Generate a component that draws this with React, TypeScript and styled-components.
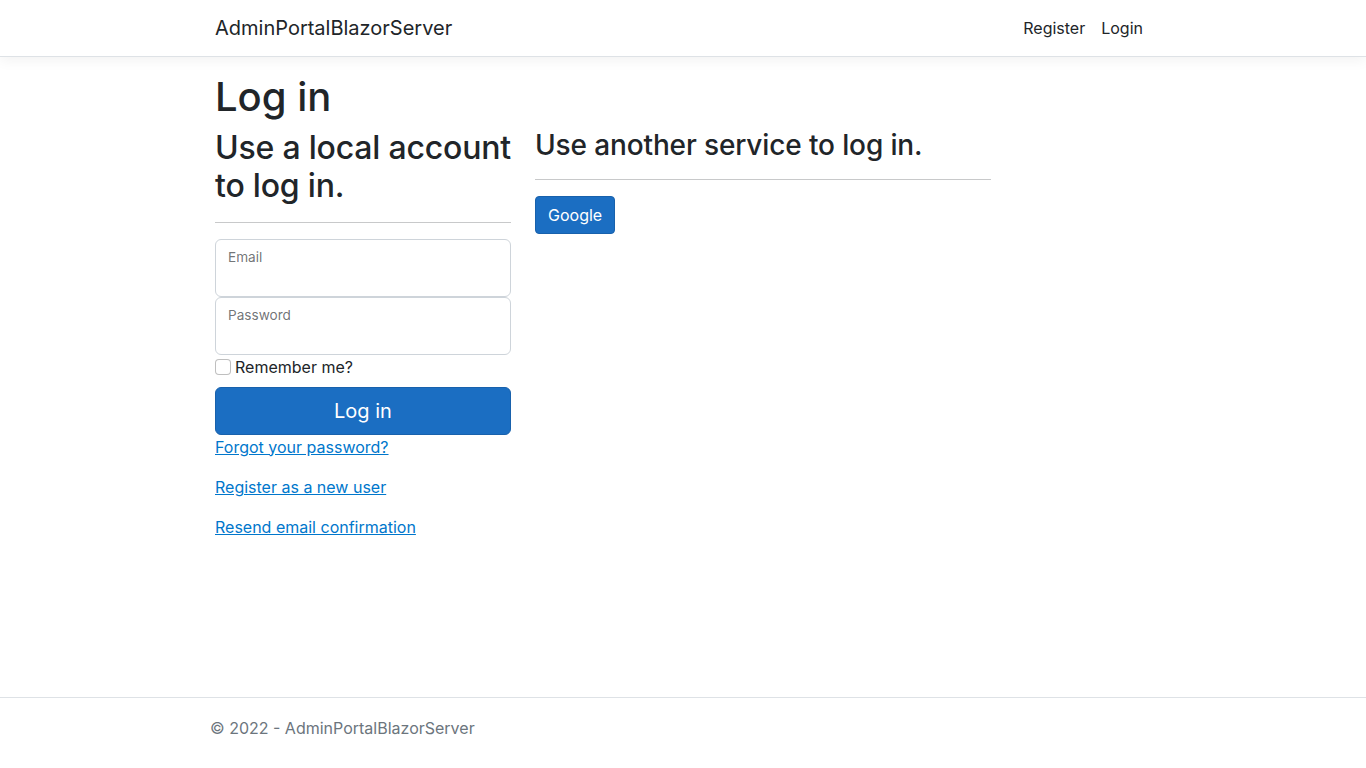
import styled, { createGlobalStyle } from "styled-components";

const GlobalStyle = createGlobalStyle`
  *, *::before, *::after {
    box-sizing: border-box;
  }
  html, body {
    margin: 0;
    padding: 0;
  }
  body {
    font-family: Inter, "Noto Sans", "Liberation Sans", sans-serif;
    font-size: 16px;
    line-height: 1.5;
    color: #212529;
    background: #fff;
  }
`;

const Page = styled.div`
  min-height: 100vh;
  display: flex;
  flex-direction: column;
  padding-bottom: 10px;
`;

const NavBar = styled.header`
  background: #fff;
  border-bottom: 1px solid #dee2e6;
  box-shadow: 0 0.25rem 0.75rem rgba(0, 0, 0, 0.05);
  margin-bottom: 16px;
`;

const Container = styled.div<{ $pad?: number }>`
  width: 960px;
  margin: 0 auto;
  padding: 0 ${(p) => p.$pad ?? 12}px;
`;

const NavInner = styled(Container)`
  height: 56px;
  display: flex;
  align-items: center;
  justify-content: space-between;
`;

const Brand = styled.a`
  font-size: 20px;
  line-height: 30px;
  color: #212529;
  text-decoration: none;
`;

const NavLinks = styled.nav`
  display: flex;
`;

const NavLink = styled.a`
  padding: 8px;
  color: #212529;
  text-decoration: none;
`;

const Main = styled(Container)`
  flex: 1;
`;

const Title = styled.h1`
  font-size: 40px;
  font-weight: 500;
  line-height: 1.2;
  margin: 0 0 8px;
`;

const Row = styled.div`
  display: flex;
  margin: 0 -12px;
`;

const Col = styled.div<{ $width: number }>`
  width: ${(p) => p.$width}px;
  padding: 0 12px;
`;

const Heading2 = styled.h2`
  font-size: 32px;
  font-weight: 500;
  line-height: 1.2;
  letter-spacing: -0.2px;
  margin: 0 0 8px;
`;

const Heading3 = styled.h3`
  font-size: 28px;
  font-weight: 500;
  line-height: 1.2;
  letter-spacing: -0.13px;
  margin: 0 0 8px;
`;

const Rule = styled.hr`
  margin: 16px 0;
  border: 0;
  border-top: 1px solid #c8c9ca;
`;

const FloatingField = styled.label`
  display: flex;
  flex-direction: column;
  height: 58px;
  border: 1px solid #ced4da;
  border-radius: 6px;
  padding: 9px 12px 0;
  background: #fff;
`;

const FieldLabel = styled.span`
  font-size: 13.6px;
  line-height: 17px;
  color: rgba(33, 37, 41, 0.65);
`;

const FieldInput = styled.input`
  border: 0;
  outline: none;
  padding: 0;
  font: inherit;
  font-size: 16px;
  line-height: 24px;
  background: transparent;
  color: #212529;
`;

const CheckRow = styled.label`
  display: flex;
  align-items: center;
  gap: 4px;
  margin-bottom: 8px;
  line-height: 24px;
`;

const CheckBox = styled.span`
  width: 16px;
  height: 16px;
  border: 1px solid rgba(0, 0, 0, 0.25);
  border-radius: 4px;
  background: #fff;
`;

const Button = styled.button<{ $large?: boolean }>`
  display: block;
  width: ${(p) => (p.$large ? "100%" : "auto")};
  font-family: inherit;
  font-size: ${(p) => (p.$large ? 20 : 16)}px;
  line-height: ${(p) => (p.$large ? 30 : 24)}px;
  padding: ${(p) => (p.$large ? "8px 16px" : "6px 12px")};
  color: #fff;
  background: #1b6ec2;
  border: 1px solid #1861ac;
  border-radius: ${(p) => (p.$large ? 6 : 4)}px;
  cursor: pointer;
`;

const LinkPara = styled.p`
  margin: 0 0 16px;
`;

const Link = styled.a`
  color: #0077cc;
  text-decoration: underline;
`;

const Footer = styled.footer`
  border-top: 1px solid #dee2e6;
  line-height: 60px;
  color: #6c757d;
  white-space: nowrap;
`;

export default function App() {
  return (
    <Page>
      <GlobalStyle />
      <NavBar>
        <NavInner>
          <Brand href="#">AdminPortalBlazorServer</Brand>
          <NavLinks>
            <NavLink href="#">Register</NavLink>
            <NavLink href="#">Login</NavLink>
          </NavLinks>
        </NavInner>
      </NavBar>
      <Main>
        <Title>Log in</Title>
        <Row>
          <Col $width={320}>
            <Heading2>Use a local account to log in.</Heading2>
            <Rule />
            <FloatingField>
              <FieldLabel>Email</FieldLabel>
              <FieldInput type="email" />
            </FloatingField>
            <FloatingField>
              <FieldLabel>Password</FieldLabel>
              <FieldInput type="password" />
            </FloatingField>
            <CheckRow>
              <CheckBox />
              Remember me?
            </CheckRow>
            <Button $large>Log in</Button>
            <LinkPara>
              <Link href="#">Forgot your password?</Link>
            </LinkPara>
            <LinkPara>
              <Link href="#">Register as a new user</Link>
            </LinkPara>
            <LinkPara>
              <Link href="#">Resend email confirmation</Link>
            </LinkPara>
          </Col>
          <Col $width={480}>
            <Heading3>Use another service to log in.</Heading3>
            <Rule />
            <Button>Google</Button>
          </Col>
        </Row>
      </Main>
      <Footer>
        <Container $pad={7}>© 2022 - AdminPortalBlazorServer</Container>
      </Footer>
    </Page>
  );
}
